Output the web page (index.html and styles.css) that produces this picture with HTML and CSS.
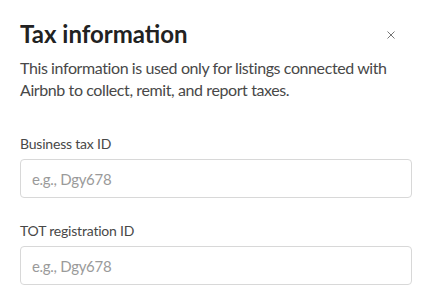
FILE: index.html
```html
<!DOCTYPE html>
<html lang="en">
<head>
<meta charset="utf-8">
<title>Tax information</title>
<link rel="stylesheet" href="styles.css">
</head>
<body>
<div class="modal">
  <div class="header">
    <h1 class="title">Tax information</h1>
    <button class="close" type="button" aria-label="Close">
      <svg width="8" height="8" viewBox="0 0 8 8" aria-hidden="true">
        <path d="M0.5 0.5 L7.5 7.5 M7.5 0.5 L0.5 7.5" stroke="#767676" stroke-width="1" fill="none"/>
      </svg>
    </button>
  </div>
  <p class="desc">This information is used only for listings connected with Airbnb to collect, remit, and report taxes.</p>
  <div class="field first">
    <label class="label" for="btid">Business tax ID</label>
    <input class="input" id="btid" type="text" placeholder="e.g., Dgy678">
  </div>
  <div class="field">
    <label class="label" for="totid">TOT registration ID</label>
    <input class="input" id="totid" type="text" placeholder="e.g., Dgy678">
  </div>
</div>
</body>
</html>
```
FILE: styles.css
```css
html, body {
  margin: 0;
  padding: 0;
  background: #ffffff;
}
body {
  font-family: Lato, "Open Sans", sans-serif;
  color: #484848;
}
.modal {
  width: 392px;
  padding: 20px 0 0 20px;
}
.header {
  display: flex;
  align-items: center;
  justify-content: space-between;
}
.title {
  margin: 0;
  font-size: 24px;
  line-height: 28px;
  font-weight: 700;
  color: #222222;
}
.close {
  width: 24px;
  height: 24px;
  margin: 2px 9px 0 0;
  padding: 0;
  border: 0;
  background: transparent;
  display: flex;
  align-items: center;
  justify-content: center;
}
.desc {
  margin: 9px 0 0 0;
  font-size: 16px;
  line-height: 22px;
  letter-spacing: -0.4px;
  color: #484848;
}
.field {
  display: flex;
  flex-direction: column;
  gap: 6px;
  margin-top: 24px;
}
.field.first {
  margin-top: 34px;
}
.label {
  font-size: 14px;
  line-height: 18px;
  letter-spacing: -0.2px;
  color: #484848;
}
.input {
  box-sizing: border-box;
  width: 392px;
  height: 39px;
  margin: 0;
  padding: 0 11px;
  border: 1px solid #d8d8d8;
  border-radius: 4px;
  font-family: Lato, "Open Sans", sans-serif;
  font-size: 15px;
  letter-spacing: -0.3px;
  color: #484848;
  outline: none;
  background: #fff;
}
.input::placeholder {
  color: #9a9a9a;
  opacity: 1;
}
```
